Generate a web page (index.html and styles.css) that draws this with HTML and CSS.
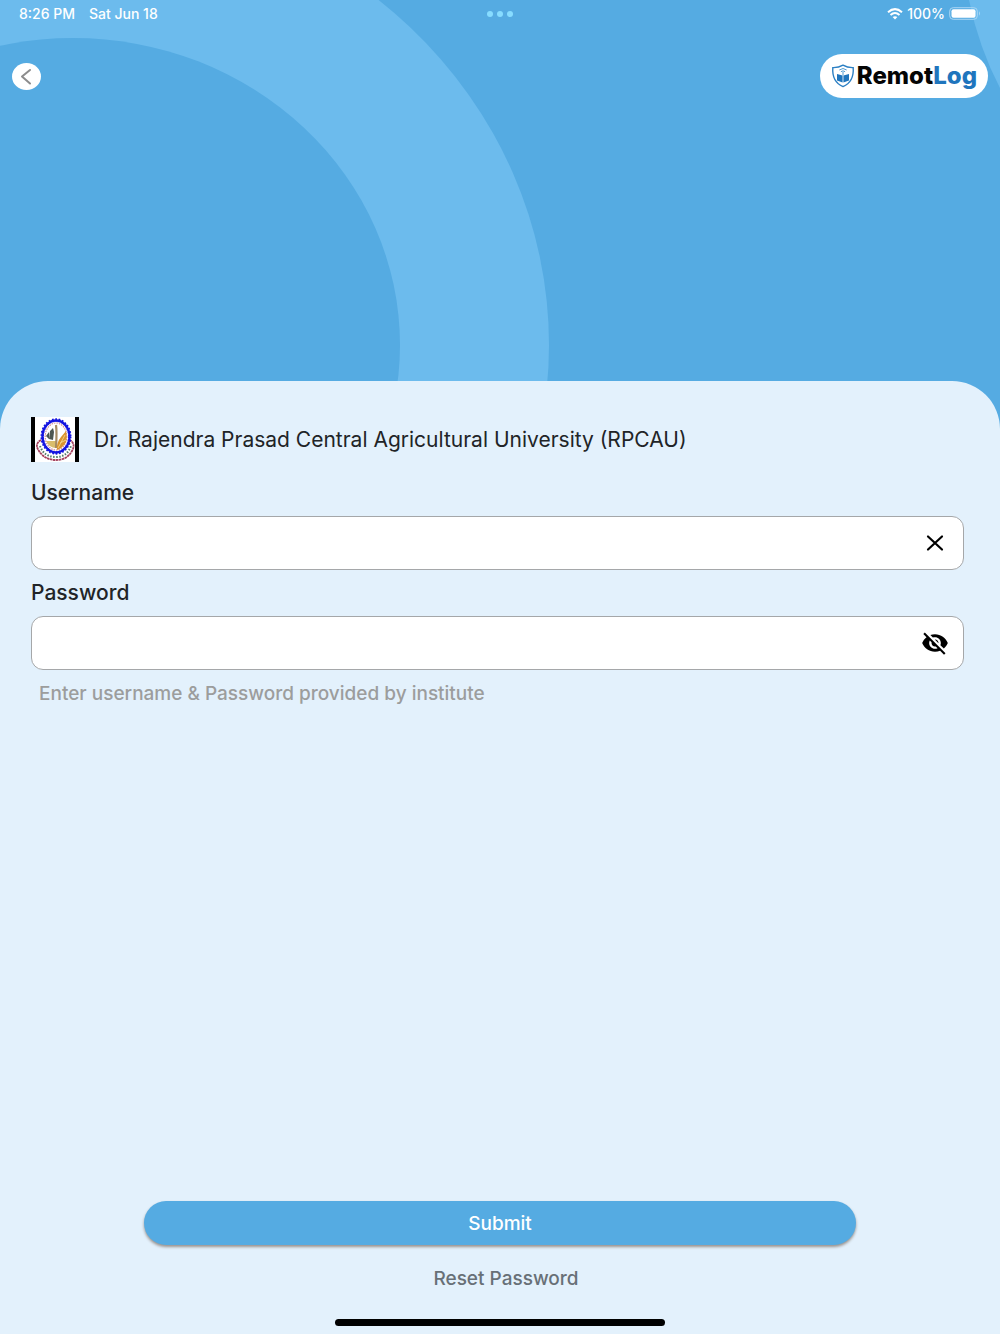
FILE: index.html
```html
<!DOCTYPE html>
<html lang="en">
<head>
<meta charset="utf-8">
<meta name="viewport" content="width=device-width, initial-scale=1">
<title>RemotLog</title>
<link rel="stylesheet" href="styles.css">
</head>
<body>
<div class="screen">
  <svg class="backdrop" viewBox="0 0 1000 440" preserveAspectRatio="none" aria-hidden="true">
    <ellipse class="ring" cx="73" cy="345" rx="476" ry="450"/>
    <ellipse class="ring-hole" cx="73" cy="345" rx="327" ry="307"/>
    <path class="ring" d="M969 0Q979 48 1000 88V0Z"/>
  </svg>
  <header class="hero">
    <div class="status">
      <div class="status-group status-time"><span>8:26 PM</span><span>Sat Jun 18</span></div>
      <svg class="dots" width="26" height="6" viewBox="0 0 26 6" aria-hidden="true"><circle cx="3" cy="3" r="3"/><circle cx="13" cy="3" r="3"/><circle cx="23" cy="3" r="3"/></svg>
      <div class="status-group status-right">
        <svg width="16" height="12" viewBox="0 0 16 12" fill="none" stroke="#fff" stroke-width="2" aria-hidden="true"><path d="M1 4.3Q8-2 15 4.3M3.5 7Q8 3 12.5 7"/><path d="M5.6 9.1Q8 7.2 10.4 9.1L8 11.5Z" fill="#fff" stroke="none"/></svg>
        <span>100%</span>
        <svg width="32" height="13" viewBox="0 0 32 13" aria-hidden="true"><rect x=".7" y=".7" width="27.6" height="11.6" rx="3.5" fill="none" stroke="#a9d6f4"/><rect x="2.5" y="2.3" width="24" height="8.4" rx="2" fill="#fff"/><path d="M30 4.3Q32 6.5 30 8.7Z" fill="#a9d6f4"/></svg>
      </div>
    </div>
    <div class="topbar">
      <button class="back" type="button" aria-label="Back">
        <svg width="29" height="27" viewBox="0 0 29 27" fill="none" stroke="#8c8c8c" stroke-width="2" stroke-linecap="round" stroke-linejoin="round"><path d="M18 7L10 13.5L18 20.5"/></svg>
      </button>
      <div class="brand">
        <svg width="24" height="24" viewBox="0 0 24 24" aria-hidden="true">
          <path d="M12 1.2Q16.5 3.8 22.2 3.6Q23.2 17.8 12 22.6Q.8 17.8 1.8 3.6Q7.5 3.8 12 1.2Z" fill="#fff" stroke="#2b7fc3" stroke-width="1.4"/>
          <path d="M6 10L11.6 11.6V18.4L6 16.6ZM18 10L12.4 11.6V18.4L18 16.6Z" fill="#1f75bd"/>
          <path d="M8.3 6Q12 3 15.7 6M9.9 7.7Q12 6 14.1 7.7M12 8V11.5" fill="none" stroke="#4f9bd2" stroke-width="1"/>
        </svg>
        <span class="brand-name">Remot<span class="brand-accent">Log</span></span>
      </div>
    </div>
  </header>
  <main class="panel">
    <form class="form">
      <div class="institute">
        <svg class="crest" width="48" height="45" viewBox="0 0 48 45" aria-hidden="true">
          <path fill="#fff" d="M0 0H48V45H0Z"/><path d="M0 0H4V45H0ZM44 0H48V45H44Z"/>
          <path d="M10 23Q3 27 8 34Q14 43 25 43Q36 43 41 34Q45 27 39 23" fill="none" stroke="#a4405c" stroke-width="1.8" stroke-dasharray="2.5 .5"/>
          <path d="M9 29Q13 40 25 40Q36 40 40 29" fill="none" stroke="#547a68" stroke-width="2" stroke-dasharray="1.5 1.5"/>
          <ellipse cx="25" cy="19.5" rx="13.5" ry="16" fill="#fff" stroke="#1414e0" stroke-width="2.4"/>
          <ellipse cx="25" cy="19.5" rx="13.8" ry="16.5" fill="none" stroke="#1414e0" stroke-width="3.4" stroke-dasharray="1.6 1.6"/>
          <ellipse cx="25" cy="19.5" rx="10.8" ry="13.5" fill="none" stroke="#d28b96" stroke-width="1.2" stroke-dasharray="1.5 1"/>
          <path d="M15 24H25V31Q18 31 15 24Z" fill="#d9bd6c"/>
          <path d="M18 22L19 14L22 11L23 15L22 23ZM15 19L18 15V22Z" fill="#4c5650"/>
          <path d="M25 8Q26 15 25 31" fill="none" stroke="#a58b64" stroke-width="2.2"/>
          <path d="M26 33Q25 26 30 20L35 14Q37 24 33 28Q30 32 26 33Z" fill="#d9942e"/>
          <path d="M27 31L34 18M29 26L35 23" stroke="#f1cf80" stroke-width="1"/>
        </svg>
        <h1 class="institute-name">Dr. Rajendra Prasad Central Agricultural University (RPCAU)</h1>
      </div>
      <label class="label" for="username">Username</label>
      <div class="field">
        <input class="input" id="username" type="text" autocomplete="username">
        <button class="field-icon" type="button" aria-label="Clear username">
          <svg width="28" height="28" viewBox="0 0 28 28" fill="none" stroke="#000" stroke-width="2.2" stroke-linecap="round"><path d="M7 7.5L21 20.5M21 7.5L7 20.5"/></svg>
        </button>
      </div>
      <label class="label" for="password">Password</label>
      <div class="field">
        <input class="input" id="password" type="password" autocomplete="current-password">
        <button class="field-icon" type="button" aria-label="Show password">
          <svg width="28" height="28" viewBox="0 0 24 24"><path d="M12 7c2.76 0 5 2.24 5 5 0 .65-.13 1.26-.36 1.83l2.92 2.92c1.51-1.26 2.7-2.89 3.43-4.75-1.73-4.39-6-7.5-11-7.5-1.4 0-2.74.25-3.98.7l2.16 2.16C10.74 7.13 11.35 7 12 7zM2 4.27l2.28 2.28.46.46C3.08 8.3 1.78 10.02 1 12c1.73 4.39 6 7.5 11 7.5 1.55 0 3.03-.3 4.38-.84l.42.42L19.73 22 21 20.73 3.27 3 2 4.27zM7.53 9.8l1.55 1.55c-.05.21-.08.43-.08.65 0 1.66 1.34 3 3 3 .22 0 .44-.03.65-.08l1.55 1.55c-.67.33-1.41.53-2.2.53-2.76 0-5-2.24-5-5 0-.79.2-1.53.53-2.2zm4.31-.78l3.15 3.15.02-.16c0-1.66-1.34-3-3-3l-.17.01z"/></svg>
        </button>
      </div>
      <p class="hint">Enter username &amp; Password provided by institute</p>
      <div class="actions">
        <button class="submit" type="submit">Submit</button>
        <a class="reset" href="#reset">Reset Password</a>
      </div>
    </form>
    <div class="home-indicator"></div>
  </main>
</div>
</body>
</html>
```
FILE: styles.css
```css
* {
  box-sizing: border-box;
}

body {
  margin: 0;
  font-family: Inter, "Liberation Sans", sans-serif;
  color: #212427;
}

button {
  padding: 0;
  border: 0;
  background: none;
  font: inherit;
  cursor: pointer;
}

svg {
  display: block;
  flex: none;
}

.screen {
  position: relative;
  display: flex;
  flex-direction: column;
  min-height: 100vh;
  background: #55abe2;
}

.backdrop {
  position: absolute;
  top: 0;
  left: 0;
  width: 100%;
  height: 440px;
}

.ring {
  fill: #6cbbed;
}

.ring-hole {
  fill: #55abe2;
}

.hero {
  position: relative;
  min-height: 381px;
}

.status {
  display: grid;
  grid-template-columns: 1fr auto 1fr;
  align-items: center;
  height: 27px;
  padding: 0 19px;
  color: #fff;
  font-size: 14px;
  font-weight: 500;
}

.status-group {
  display: flex;
  align-items: center;
}

.status-time {
  gap: 14px;
}

.status-right {
  justify-content: flex-end;
  gap: 4px;
}

.dots {
  fill: #87dcff;
}

.topbar {
  display: flex;
  justify-content: space-between;
  align-items: center;
  padding: 27px 12px 0;
}

.back {
  border-radius: 50%;
  background: #fff;
}

.brand {
  display: flex;
  align-items: center;
  gap: 2px;
  height: 44px;
  padding: 0 11px;
  border-radius: 22px;
  background: #fff;
}

.brand-name {
  color: #050505;
  font-size: 24px;
  font-weight: 800;
  line-height: 28px;
}

.brand-accent {
  color: #1f75bd;
}

.panel {
  position: relative;
  display: flex;
  flex: 1;
  flex-direction: column;
  align-items: center;
  padding: 36px 0 8px;
  border-radius: 48px 48px 0 0;
  background: #e3f1fc;
}

.form {
  display: flex;
  flex: 1;
  flex-direction: column;
  width: 100%;
  padding: 0 36px 0 31px;
}

.institute {
  display: flex;
  align-items: center;
  gap: 15px;
  margin-bottom: 15px;
}

.institute-name {
  margin: 0;
  font-size: 21px;
  font-weight: 400;
}

.label {
  font-size: 21px;
  font-weight: 500;
  line-height: 32px;
}

.field {
  display: flex;
  align-items: center;
  height: 54px;
  margin: 7px 0;
  padding-right: 14px;
  border: 1px solid #a5a7a9;
  border-radius: 12px;
  background: #fff;
}

.input {
  flex: 1;
  min-width: 0;
  height: 100%;
  padding: 0 16px;
  border: 0;
  outline: 0;
  background: none;
  font: inherit;
  font-size: 19px;
}

.hint {
  margin: 3px 8px 32px;
  color: #9c9d9d;
  font-size: 19px;
  font-weight: 500;
  line-height: 28px;
}

.actions {
  display: flex;
  flex-direction: column;
  align-items: center;
  margin-top: auto;
  padding: 0 108px 0 113px;
}

.submit {
  width: 100%;
  height: 44px;
  border-radius: 22px;
  background: #55abe2;
  box-shadow: 0 2px 3px #99938f;
  color: #fff;
  font-size: 19px;
  font-weight: 500;
}

.reset {
  margin: 20px 0 26px;
  padding-left: 12px;
  color: #687077;
  font-size: 19px;
  font-weight: 500;
  line-height: 28px;
  text-decoration: none;
}

.home-indicator {
  width: 33%;
  min-width: 328px;
  height: 7px;
  border-radius: 4px;
  background: #000;
}
```
